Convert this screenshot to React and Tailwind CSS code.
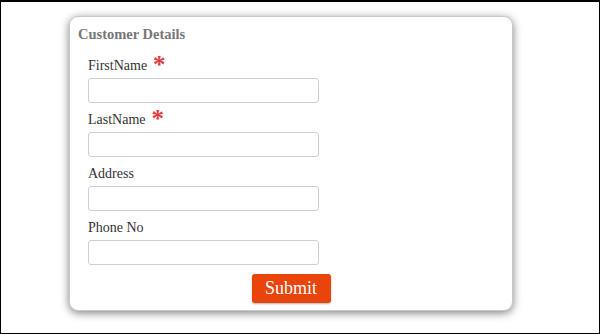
import React from "react";

const Field = ({ label, required, className }) => {
    return (
        <div className={className}>
            <div className="h-[18px] leading-[18px] text-[14px] text-[#333]">
                {label}
                {required && (
                    <span className="ml-[6px] inline-block align-top text-[25px] font-bold leading-[18px] text-[#e0393e] relative top-[-1px]">*</span>
                )}
            </div>
            <input type="text" className="mt-[3px] block w-[231px] h-[25px] border border-[#cfcfcf] rounded-[3px] bg-white outline-none" />
        </div>
    );
};

const App = () => {
    return (
        <div className="w-[600px] h-[334px] bg-white border border-black border-t-2 font-['Liberation_Serif',serif] overflow-hidden">
            {/*CARD*/}
            <div className="ml-[68px] mt-[14px] w-[444px] h-[295px] border border-[#c8c8c8] rounded-[9px] bg-white shadow-[0_2px_8px_rgba(0,0,0,0.5)] pt-[8px]">
                <div className="pl-[8px] text-[14.5px] leading-[18px] font-bold text-[#777]">Customer Details</div>
                <div className="pl-[18px] mt-[14px]">
                    <Field label="FirstName" required />
                    <Field label="LastName" required className="mt-[8px]" />
                    <Field label="Address" className="mt-[8px]" />
                    <Field label="Phone No" className="mt-[8px]" />
                </div>
                <div className="flex justify-center mt-[9px]">
                    <button type="button" className="w-[79px] h-[29px] bg-[#e8440b] text-white text-[18px] leading-[29px] rounded-[3px] shadow-[0_1px_2px_rgba(0,0,0,0.3)]">Submit</button>
                </div>
            </div>
        </div>
    );
};

export default App;
